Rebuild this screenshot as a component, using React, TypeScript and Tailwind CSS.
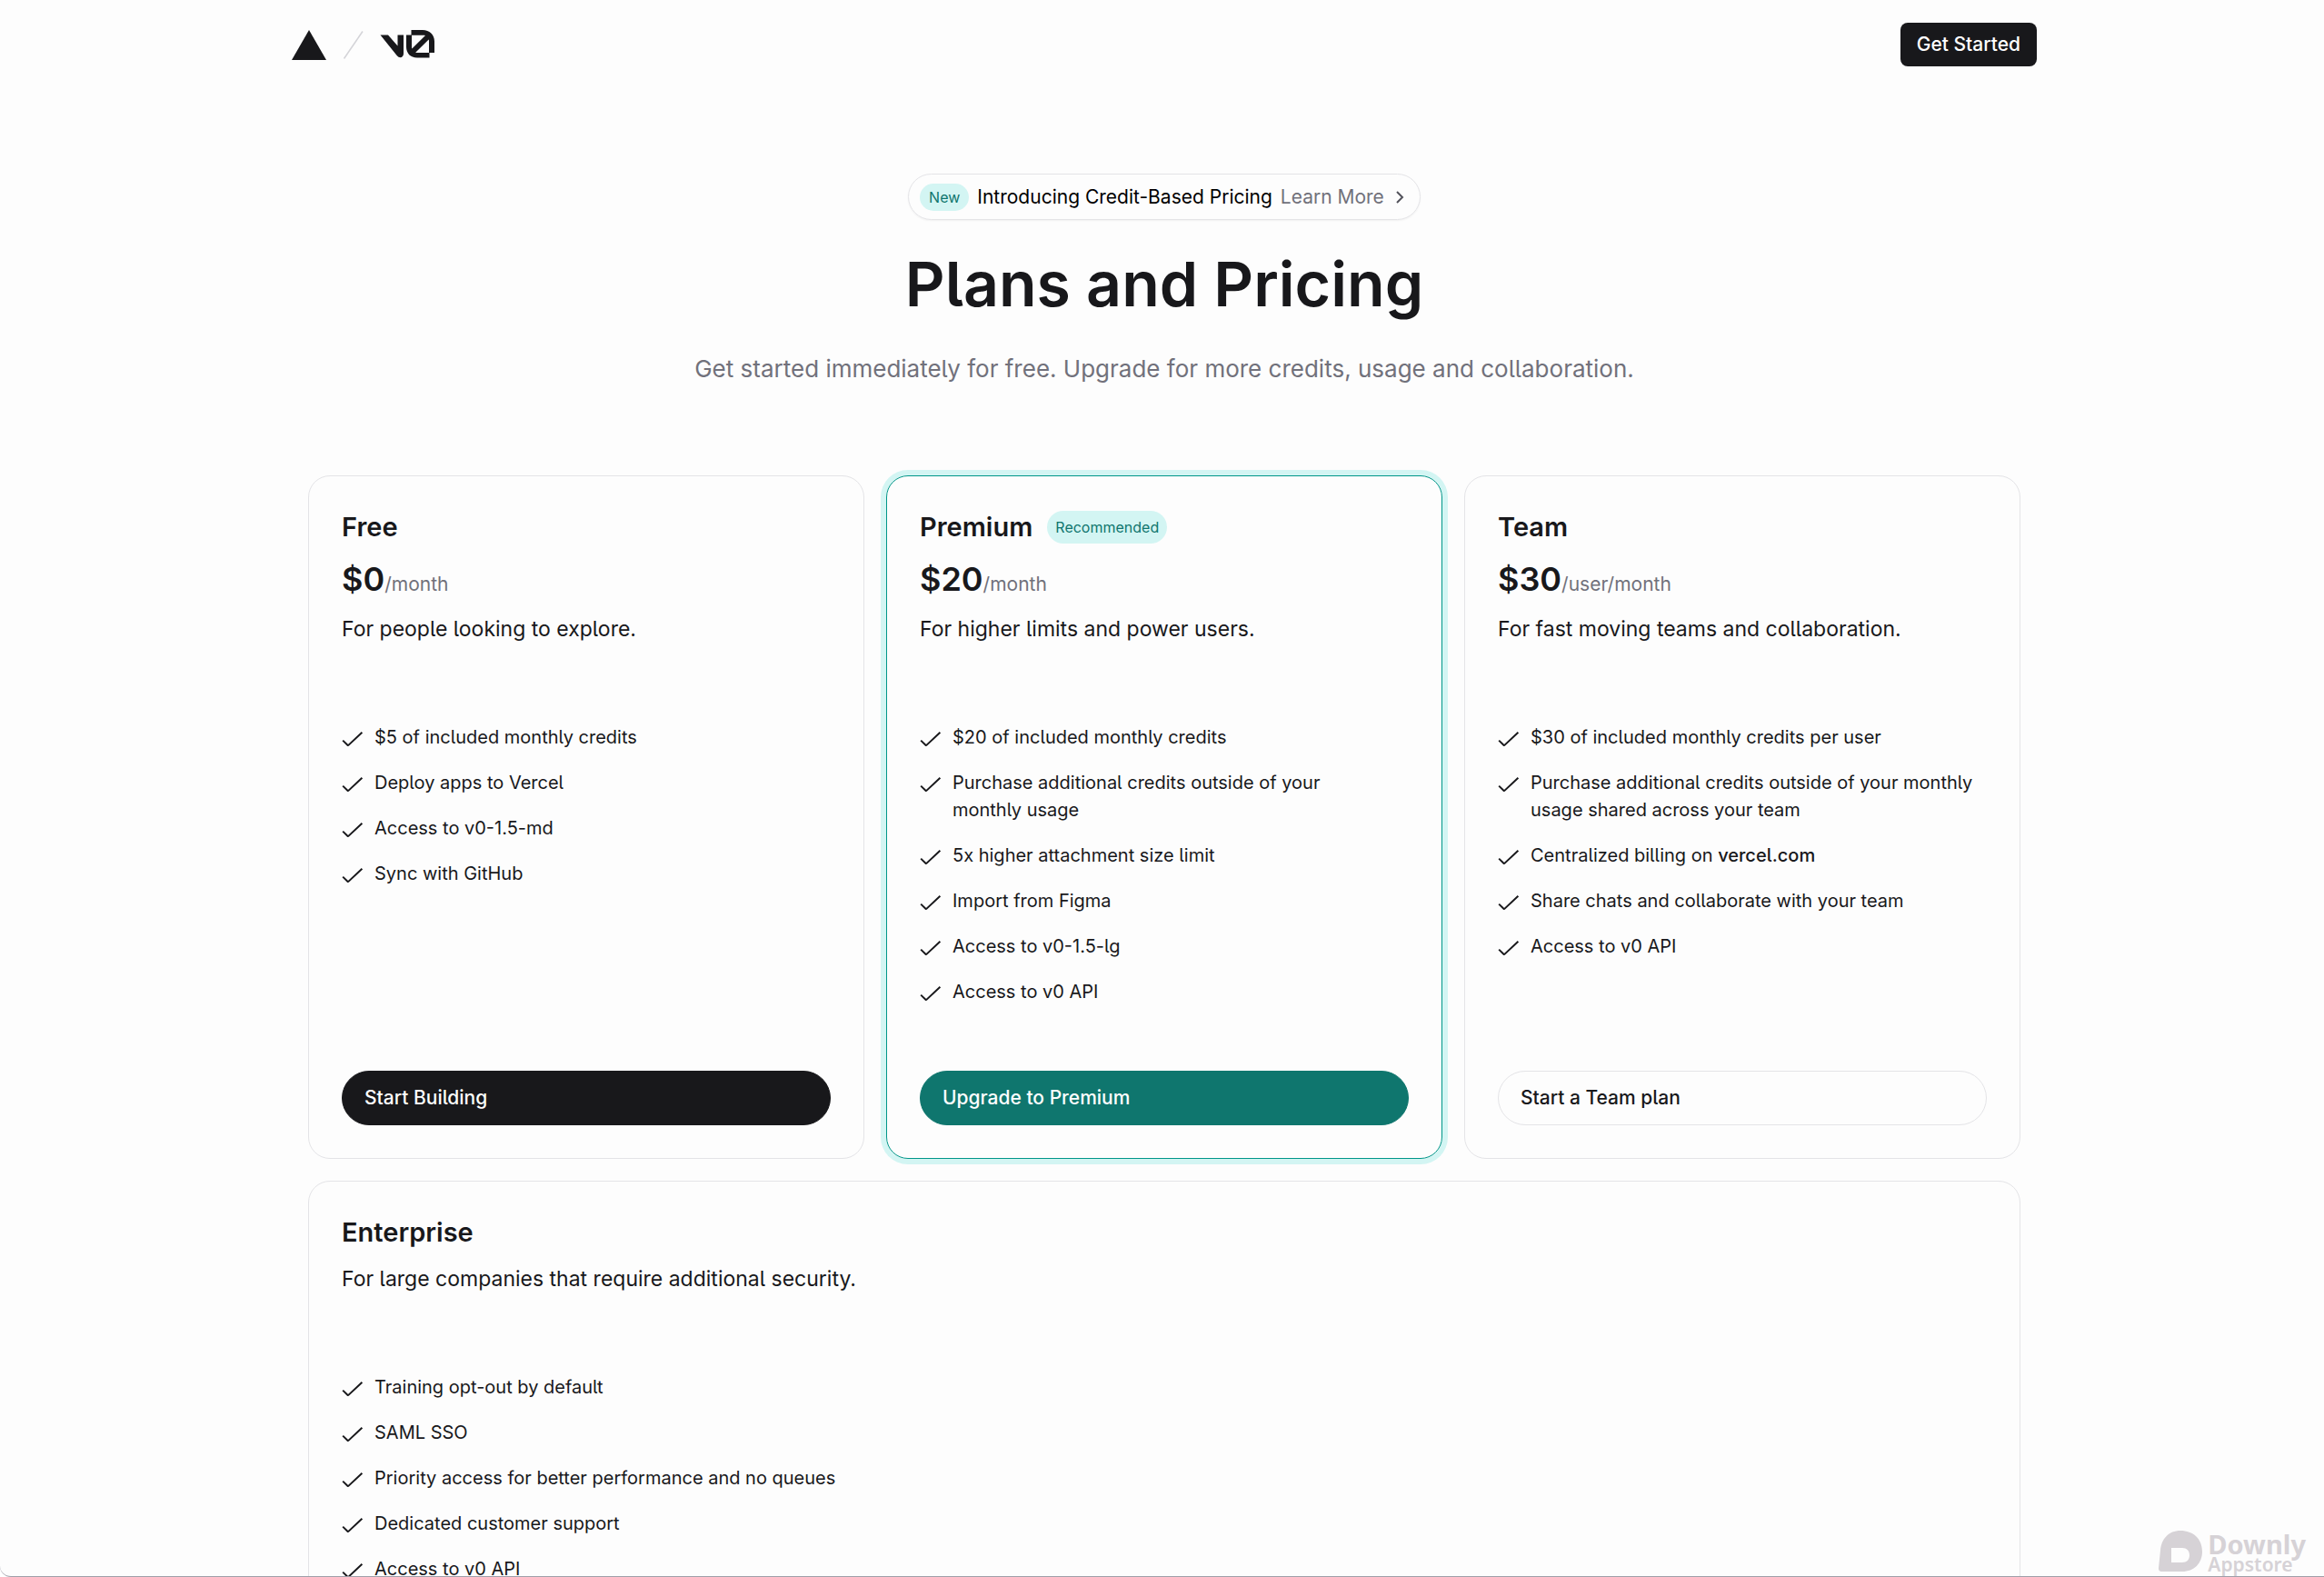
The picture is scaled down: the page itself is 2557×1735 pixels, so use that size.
import type { ReactNode } from "react";

type Plan = {
  name: string;
  price?: string;
  unit?: string;
  badge?: string;
  description: string;
  features: ReactNode[];
  cta?: string;
  cardClass: string;
  buttonClass?: string;
};

const plans: Plan[] = [
  {
    name: "Free",
    price: "$0",
    unit: "/month",
    description: "For people looking to explore.",
    features: [
      "$5 of included monthly credits",
      "Deploy apps to Vercel",
      "Access to v0-1.5-md",
      "Sync with GitHub",
    ],
    cta: "Start Building",
    cardClass: "border-zinc-200",
    buttonClass: "border-zinc-900 bg-zinc-900 text-white",
  },
  {
    name: "Premium",
    price: "$20",
    unit: "/month",
    badge: "Recommended",
    description: "For higher limits and power users.",
    features: [
      "$20 of included monthly credits",
      "Purchase additional credits outside of your monthly usage",
      "5x higher attachment size limit",
      "Import from Figma",
      "Access to v0-1.5-lg",
      "Access to v0 API",
    ],
    cta: "Upgrade to Premium",
    cardClass: "border-teal-600 ring-6 ring-[#d3f5f3]",
    buttonClass: "border-[#0f766e] bg-[#0f766e] text-white",
  },
  {
    name: "Team",
    price: "$30",
    unit: "/user/month",
    description: "For fast moving teams and collaboration.",
    features: [
      "$30 of included monthly credits per user",
      "Purchase additional credits outside of your monthly usage shared across your team",
      <>
        Centralized billing on{" "}
        <a href="#vercel" className="font-medium">
          vercel.com
        </a>
      </>,
      "Share chats and collaborate with your team",
      "Access to v0 API",
    ],
    cta: "Start a Team plan",
    cardClass: "border-zinc-200",
    buttonClass: "border-zinc-200",
  },
  {
    name: "Enterprise",
    description: "For large companies that require additional security.",
    features: [
      "Training opt-out by default",
      "SAML SSO",
      "Priority access for better performance and no queues",
      "Dedicated customer support",
      "Access to v0 API",
    ],
    cardClass: "border-zinc-200 lg:col-span-3",
  },
];

function CheckIcon() {
  return (
    <svg viewBox="0 0 24 24" className="mt-[5px] size-6 shrink-0" fill="none" aria-hidden="true">
      <path
        d="M1.2 13.6 L6.4 18.7 Q7 19.2 7.6 18.6 L22.4 4.8"
        stroke="currentColor"
        strokeWidth="2"
      />
    </svg>
  );
}

function Logo() {
  return (
    <a href="#home" aria-label="v0 by Vercel" className="flex items-center">
      <svg viewBox="0 -1 158 34" className="h-[34px] w-[158px]" aria-hidden="true">
        <path d="M19 0 L38 33 H0Z" fill="#18181b" />
        <path d="M57.5 31.5 L78 1.5" stroke="#d4d4d8" strokeWidth="1.5" />
        {/* v0 wordmark */}
        <g fill="#18181b">
          <path d="M97.5 5.5 H106 L116.5 17.5 V5.5 H123 V26 C123 30.5 118.5 31.5 115.8 28.2Z" />
          <path d="M131.5 0 H144 C151.5 0 157 5 157 12.5 V25 H151 V12.5 C151 11.6 150.9 11 150.7 10.5 L136.2 24.8 C136.7 24.9 137.2 25 138 25 H151.5 V30.5 H138 C130.5 30.5 126 25.5 126 18.5 V5.5 H132 V18.5 C132 19.3 132.1 20 132.3 20.6 L147 6.1 C146.3 5.8 145.3 5.7 144 5.7 H131.5Z" />
        </g>
      </svg>
    </a>
  );
}

function PlanCard({ plan }: { plan: Plan }) {
  return (
    <section className={`flex flex-col rounded-3xl border p-9 ${plan.cardClass}`}>
      <div className="flex flex-col gap-[13px]">
        <div className="flex h-10 items-center gap-4">
          <h2 className="text-[29px] leading-10 font-semibold">{plan.name}</h2>
          {plan.badge && (
            <span className="rounded-full bg-[#d3f5f3] px-[9px] text-base leading-9 text-[#0f766e]">
              {plan.badge}
            </span>
          )}
        </div>
        {plan.price && (
          <p className="flex items-baseline">
            <span className="text-4xl leading-12 font-semibold">{plan.price}</span>
            <span className="text-[21px] leading-[30px] text-zinc-500">{plan.unit}</span>
          </p>
        )}
        <p className="text-[23px] leading-9">{plan.description}</p>
      </div>
      <ul className="mt-[86px] flex flex-col gap-5">
        {plan.features.map((feature, i) => (
          <li key={i} className="flex gap-3 text-[20px] leading-[30px]">
            <CheckIcon />
            <span className="text-pretty">{feature}</span>
          </li>
        ))}
      </ul>
      {plan.cta && (
        <div className="mt-auto pt-[72px]">
          <button
            type="button"
            className={`h-[60px] w-full rounded-full border px-6 text-left text-[21px] font-medium ${plan.buttonClass}`}
          >
            {plan.cta}
          </button>
        </div>
      )}
    </section>
  );
}

function Watermark() {
  return (
    <div className="absolute right-5 bottom-1 flex items-end gap-[6px] text-[#d6d2d6]" aria-hidden="true">
      <svg viewBox="0 0 48 46" className="h-[46px] w-12">
        <path
          d="M24 0 C38 0 48 9 48 23 C48 36 39 45 26 45 H4 C1 45 0 44 0 41 L2 22 C3 9 11 0 24 0Z M14 19 V35 H26 C31 35 34 32 34 27 C34 22 31 19 26 19Z"
          fill="currentColor"
          fillRule="evenodd"
        />
      </svg>
      <div className="font-['Noto_Sans',sans-serif]">
        <div className="text-[29px] leading-[26px] font-bold">Downly</div>
        <div className="text-[21px] leading-[18px] font-semibold">Appstore</div>
      </div>
    </div>
  );
}

export default function App() {
  return (
    <div className="relative h-screen overflow-hidden rounded-bl-xl border-b border-zinc-400 bg-[#fdfdfd] pl-[5px] font-['Inter','Liberation_Sans',sans-serif] text-zinc-900 [font-feature-settings:'cv05']">
      <header className="mx-auto flex h-[98px] max-w-[1920px] items-center justify-between">
        <Logo />
        <button type="button" className="h-12 rounded-lg bg-zinc-900 px-[18px] text-[21px] font-medium text-white">
          Get Started
        </button>
      </header>

      <main className="mx-auto max-w-[1884px] pt-[93px]">
        <div className="flex flex-col items-center text-center">
          <a
            href="#pricing-update"
            className="flex h-[51px] items-center gap-[9px] rounded-full border border-zinc-200 px-3 text-[21px] shadow-xs"
          >
            <span className="rounded-full bg-[#d3f5f3] px-[10px] text-base leading-[30px] text-[#0f766e]">
              New
            </span>
            <span className="text-black">Introducing Credit-Based Pricing</span>
            <span className="text-zinc-500">Learn More</span>
            <svg viewBox="0 0 18 18" className="size-[18px]" fill="none" aria-hidden="true">
              <path d="M5 3 L11 9 L5 15" stroke="#52525b" strokeWidth="2" />
            </svg>
          </a>
          <h1 className="mt-8 text-[68px] leading-[76px] font-semibold">Plans and Pricing</h1>
          <p className="mt-8 text-[26px] leading-12 text-zinc-500">
            Get started immediately for free. Upgrade for more credits, usage and collaboration.
          </p>
        </div>

        <div className="mt-[93px] grid gap-6 lg:grid-cols-3">
          {plans.map((plan) => (
            <PlanCard key={plan.name} plan={plan} />
          ))}
        </div>
      </main>

      <Watermark />
    </div>
  );
}
